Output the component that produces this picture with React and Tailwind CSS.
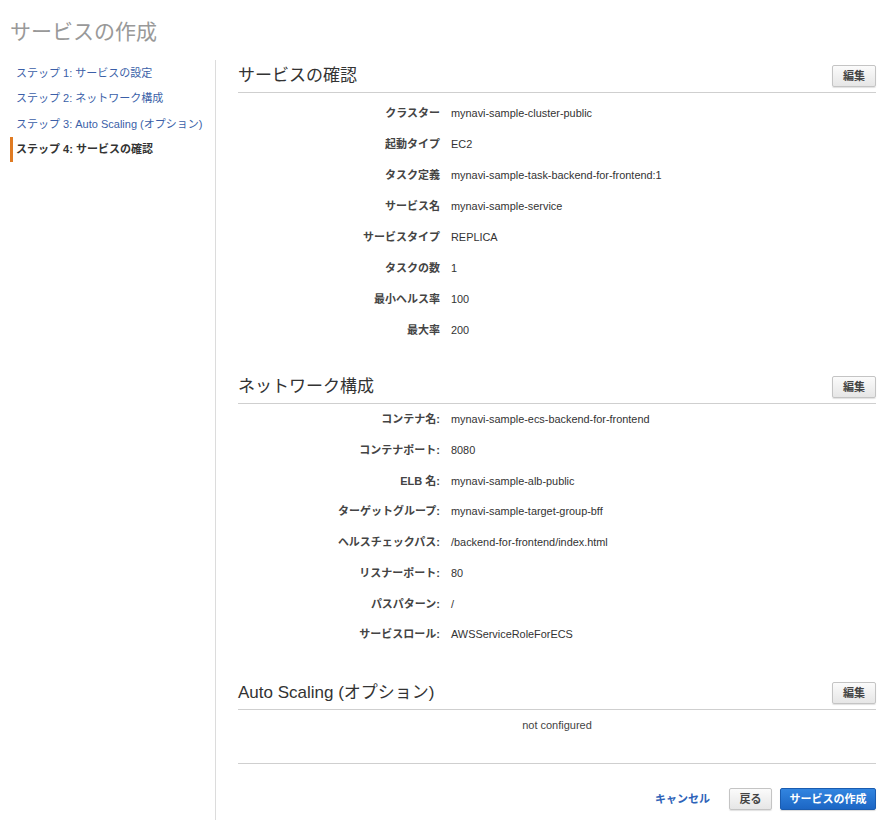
import React from "react";

const service = [
  ["クラスター", "mynavi-sample-cluster-public"],
  ["起動タイプ", "EC2"],
  ["タスク定義", "mynavi-sample-task-backend-for-frontend:1"],
  ["サービス名", "mynavi-sample-service"],
  ["サービスタイプ", "REPLICA"],
  ["タスクの数", "1"],
  ["最小ヘルス率", "100"],
  ["最大率", "200"],
];

const network = [
  ["コンテナ名:", "mynavi-sample-ecs-backend-for-frontend"],
  ["コンテナポート:", "8080"],
  ["ELB 名:", "mynavi-sample-alb-public"],
  ["ターゲットグループ:", "mynavi-sample-target-group-bff"],
  ["ヘルスチェックパス:", "/backend-for-frontend/index.html"],
  ["リスナーポート:", "80"],
  ["パスパターン:", "/"],
  ["サービスロール:", "AWSServiceRoleForECS"],
];

const steps = [
  "ステップ 1: サービスの設定",
  "ステップ 2: ネットワーク構成",
  "ステップ 3: Auto Scaling (オプション)",
];

function EditButton() {
  return (
    <button className="h-[22px] w-[44px] rounded-[2px] border border-[#c4c4c4] bg-gradient-to-b from-[#fbfbfb] to-[#e6e6e6] text-[11px] font-bold text-[#444] shadow-[0_1px_1px_rgba(0,0,0,0.12)]">
      編集
    </button>
  );
}

function SectionHeader({ title }) {
  return (
    <div className="flex items-center justify-between border-b border-[#cfcfcf] pb-[5px]">
      <h2 className="text-[17px] leading-[22px] text-[#333]">{title}</h2>
      <EditButton />
    </div>
  );
}

function Rows({ rows, rowH }) {
  return (
    <div className={rowH === "a" ? "pt-[5px]" : "pt-0"}>
      {rows.map(([k, v]) => (
        <div
          key={k}
          className={`flex items-center ${rowH === "a" ? "h-[31px]" : "h-[30.75px]"}`}
        >
          <div className="w-[202px] shrink-0 text-right text-[11px] font-bold text-[#444]">
            {k}
          </div>
          <div className="pl-[11px] text-[10.9px] text-[#333]">{v}</div>
        </div>
      ))}
    </div>
  );
}

export default function App() {
  return (
    <div
      className="min-h-[820px] bg-white text-[#333]"
      style={{ fontFamily: '"Liberation Sans", "Noto Sans CJK JP", sans-serif' }}
    >
      <div className="h-[60px] pl-[10px] pt-[19px]">
        <h1 className="text-[21px] leading-[25px] text-[#999]">サービスの作成</h1>
      </div>
      <div className="flex">
        <nav className="w-[215px] shrink-0 pl-[10px]">
          {steps.map((s) => (
            <div key={s} className="flex h-[25.6px] items-center pl-[6px] text-[11px] text-[#3b5fa8]">
              {s}
            </div>
          ))}
          <div className="flex h-[25.6px] items-center border-l-[3px] border-[#e07b22] pl-[3px] text-[11px] font-bold text-[#333]">
            ステップ 4: サービスの確認
          </div>
        </nav>
        <main className="min-h-[760px] flex-1 border-l border-[#dcdcdc] pl-[22px] pr-[15px] pt-[5px]">
          <section>
            <SectionHeader title="サービスの確認" />
            <Rows rows={service} rowH="a" />
          </section>
          <section className="mt-[30px]">
            <SectionHeader title="ネットワーク構成" />
            <Rows rows={network} rowH="b" />
          </section>
          <section className="mt-[32px]">
            <SectionHeader title="Auto Scaling (オプション)" />
            <div className="border-b border-[#cfcfcf] pb-[30px] pt-[7px] text-center text-[11px] leading-[16px] text-[#444]">
              not configured
            </div>
          </section>
          <div className="mt-[24px] flex items-center justify-end">
            <a className="mr-[19px] text-[11px] font-bold text-[#2d62b8]">キャンセル</a>
            <button className="h-[22px] w-[43px] rounded-[2px] border border-[#c4c4c4] bg-gradient-to-b from-[#fbfbfb] to-[#e6e6e6] text-[11px] font-bold text-[#444] shadow-[0_1px_1px_rgba(0,0,0,0.12)]">
              戻る
            </button>
            <button className="ml-[8px] h-[22px] w-[96px] rounded-[2px] border border-[#1a5cb0] bg-gradient-to-b from-[#3285e0] to-[#1c66c4] text-[11px] font-bold text-white shadow-[0_1px_1px_rgba(0,0,0,0.15)]">
              サービスの作成
            </button>
          </div>
        </main>
      </div>
    </div>
  );
}
